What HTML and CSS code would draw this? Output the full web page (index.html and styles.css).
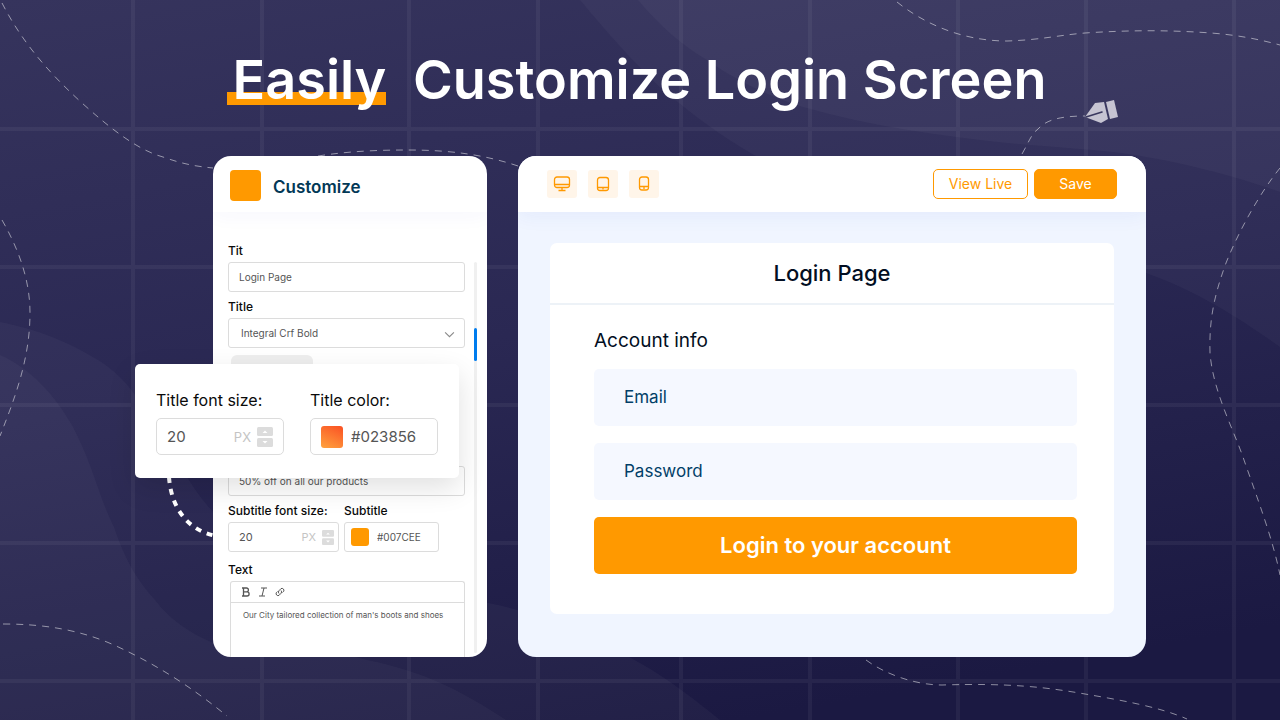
FILE: index.html
```
<!DOCTYPE html>
<html lang="en">
<head>
    <meta charset="UTF-8">
    <meta name="viewport" content="width=device-width, initial-scale=1.0">
    <title>Easily Customize Login Screen</title>
    <link rel="stylesheet" href="styles.css">
</head>
<body>
    <!-- Background waves, grid and dashed lines -->
    <svg class="backdrop" viewBox="0 0 1280 720" preserveAspectRatio="xMidYMid slice" aria-hidden="true">
        <g fill="#fff" fill-opacity="0.03">
            <path d="M580 0C605 30 650 82 679 103C705 124 728 140 754 155C880 225 1020 235 1146 273C1200 292 1245 322 1280 347V0Z"/>
            <path d="M638 0C660 26 680 44 707 60C735 80 770 97 803 107C870 126 940 136 1007 143C1070 149 1110 150 1146 157C1200 166 1245 180 1280 192V0Z"/>
            <path d="M0 322C40 330 68 342 98 360C150 392 150 440 187 477C260 600 400 570 488 603C550 615 600 640 640 663C670 680 698 702 720 720H0Z"/>
            <path d="M0 355C30 368 55 395 73 427C95 470 98 495 114 527C125 560 137 580 155 600C170 620 190 633 213 643C270 660 320 645 367 660C425 672 460 690 506 720H0Z"/>
        </g>
        <path class="grid-lines" d="M133 0V720M262 0V720M409 0V720M538 0V720M681 0V720M810 0V720M958 0V720M1086 0V720M1234 0V720M0 129H1280M0 267H1280M0 405H1280M0 543H1280M0 681H1280"/>
        <g class="dashes">
            <path d="M2 3C22 42 48 72 82 103C112 130 138 150 163 157C180 163 192 166 213 168"/>
            <path d="M318 156C350 151 380 150 408 150C452 150 485 155 518 166"/>
            <path d="M2 220C22 255 30 285 30 313C30 360 14 400 0 436"/>
            <path d="M3 624C45 624 80 630 114 645C160 666 195 690 227 716"/>
            <path d="M897 2C922 22 960 41 1007 41C1040 40 1060 35 1085 33C1130 30 1170 30 1211 33C1237 35 1258 39 1280 45"/>
            <path d="M1022 154C1028 144 1031 134 1038 129C1046 120 1060 116 1085 116"/>
            <path d="M1280 168C1262 190 1240 228 1226 263C1214 296 1209 320 1210 353C1213 392 1234 430 1244 460C1258 500 1273 540 1280 575"/>
            <path d="M866 660C885 674 915 685 942 685C1010 683 1045 687 1085 694C1120 700 1160 707 1187 719"/>
        </g>
        <path class="connector" d="M169 477C171 506 186 530 216 536"/>
        <g fill="#c6c4d2">
            <path d="M1085 117L1095 103L1104 102L1108 119L1101 123Z"/>
            <path d="M1106 102L1114 100L1118 117L1110 119Z"/>
        </g>
        <path d="M1086 117L1102 112" stroke="#3a385f" stroke-width="1.6" stroke-linecap="round"/>
    </svg>

    <!-- Shared icons -->
    <svg class="sprite" aria-hidden="true">
        <symbol id="stepper" viewBox="0 0 16 20">
            <rect width="16" height="9" rx="1.5" fill="#dcdcdc"/>
            <rect y="11" width="16" height="9" rx="1.5" fill="#dcdcdc"/>
            <path d="M5.500 6L8 3.500L10.500 6ZM5.500 14L8 16.500L10.500 14Z" fill="#fff"/>
        </symbol>
    </svg>

    <main class="page">
        <h1 class="headline"><span class="highlight">Easily</span> Customize Login Screen</h1>

        <div class="workspace">
            <!-- Customize panel -->
            <section class="sidebar">
                <div class="panel">
                    <header class="panel-header">
                        <span class="brand"></span>
                        <h2>Customize</h2>
                    </header>
                    <div class="panel-body">
                        <form class="settings">
                            <label for="titleText">Tit</label>
                            <input class="field" id="titleText" type="text" value="Login Page">

                            <label for="titleFont">Title</label>
                            <div class="select-wrap">
                                <select class="field" id="titleFont">
                                    <option>Integral Crf Bold</option>
                                </select>
                                <svg class="chevron" viewBox="0 0 10 6" aria-hidden="true"><path d="M1 1L5 5L9 1"/></svg>
                            </div>

                            <div class="placeholder"></div>

                            <input class="field" type="text" value="50% off on all our products" aria-label="Subtitle text">

                            <div class="pair">
                                <div class="size-col">
                                    <label for="subtitleSize">Subtitle font size:</label>
                                    <div class="field group">
                                        <input id="subtitleSize" type="text" value="20">
                                        <span class="unit">PX</span>
                                        <svg class="stepper"><use href="#stepper"/></svg>
                                    </div>
                                </div>
                                <div class="color-col">
                                    <label for="subtitleColor">Subtitle</label>
                                    <div class="field group color">
                                        <span class="swatch"></span>
                                        <input id="subtitleColor" type="text" value="#007CEE">
                                    </div>
                                </div>
                            </div>

                            <label for="bodyText">Text</label>
                            <div class="editor">
                                <div class="editor-bar">
                                    <button type="button" aria-label="Bold"><svg viewBox="0 0 10 10"><path d="M1 1H2.500V9H1M2.500 1H5.500A1.900 1.900 0 0 1 5.500 4.800H2.500M5.500 4.800H6A2.100 2.100 0 0 1 6 9H2.500" stroke-width="1.300"/></svg></button>
                                    <button type="button" aria-label="Italic"><svg viewBox="0 0 10 10"><path d="M3 1H9M1 9H7M6 1L4 9"/></svg></button>
                                    <button type="button" aria-label="Link"><svg viewBox="0 0 10 10"><path d="M4 6.500A2 2 0 0 1 4 3.700L6 1.600A2 2 0 0 1 8.700 4.300L7.500 5.500M6 3.500A2 2 0 0 1 6 6.300L4 8.400A2 2 0 0 1 1.300 5.700L2.500 4.500"/></svg></button>
                                </div>
                                <textarea id="bodyText">Our City tailored collection of man's boots and shoes</textarea>
                            </div>
                        </form>
                        <div class="scrollbar"><span class="thumb"></span></div>
                    </div>
                </div>

                <!-- Floating card with title options -->
                <div class="popover">
                    <div>
                        <label for="titleSize">Title font size:</label>
                        <div class="field group">
                            <input id="titleSize" type="text" value="20">
                            <span class="unit">PX</span>
                            <svg class="stepper"><use href="#stepper"/></svg>
                        </div>
                    </div>
                    <div>
                        <label for="titleColor">Title color:</label>
                        <div class="field group color">
                            <span class="swatch"></span>
                            <input id="titleColor" type="text" value="#023856">
                        </div>
                    </div>
                </div>
            </section>

            <!-- Live preview -->
            <section class="preview">
                <div class="toolbar">
                    <div class="devices">
                        <button type="button" aria-label="Desktop"><svg viewBox="0 0 18 18"><rect x="1.500" y="2" width="15" height="10.500" rx="2.500"/><path d="M1.500 9.500H16.500M9 12.500V15.500M5.500 15.500H12.500"/></svg></button>
                        <button type="button" aria-label="Tablet"><svg viewBox="0 0 18 18"><rect x="3.500" y="2.500" width="11" height="13" rx="2.500"/><path d="M3.500 12.500H14.500M9 13V14.500"/></svg></button>
                        <button type="button" aria-label="Phone"><svg viewBox="0 0 18 18"><rect x="4.500" y="2" width="9" height="13" rx="2.500"/><path d="M4.500 11.500H13.500M9 12V14"/></svg></button>
                    </div>
                    <button type="button" class="btn btn-outline">View Live</button>
                    <button type="button" class="btn">Save</button>
                </div>
                <div class="canvas">
                    <div class="login-card">
                        <h2>Login Page</h2>
                        <form class="login-form">
                            <h3>Account info</h3>
                            <input type="email" placeholder="Email" aria-label="Email">
                            <input type="password" placeholder="Password" aria-label="Password">
                            <button type="button">Login to your account</button>
                        </form>
                    </div>
                </div>
            </section>
        </div>
    </main>
</body>
</html>
```
FILE: styles.css
```
* {
    box-sizing: border-box;
}

body {
    margin: 0;
    min-height: 100vh;
    position: relative;
    overflow: hidden;
    font-family: Inter, "Liberation Sans", sans-serif;
    background: linear-gradient(170deg, #36345d 0%, #2a2853 45%, #1b1942 90%);
}

h1, h2, h3 {
    margin: 0;
}

input, select, textarea, button {
    font: inherit;
    color: inherit;
    margin: 0;
    padding: 0;
    border: 0;
    background: none;
    outline: none;
    min-width: 0;
}

/* Background drawing */
.backdrop {
    position: absolute;
    top: 0;
    left: 0;
    width: 100%;
    height: 100%;
    fill: none;
}

.sprite {
    display: none;
}

.grid-lines {
    stroke: #fff;
    stroke-opacity: 0.05;
    stroke-width: 4;
}

.dashes {
    stroke: #fff;
    stroke-opacity: 0.5;
    stroke-dasharray: 7 6;
}

.connector {
    stroke: #fff;
    stroke-width: 4;
    stroke-dasharray: 6 6;
}

/* Page layout */
.page {
    position: relative;
    padding: 44px 134px 62px 213px;
}

.headline {
    margin-left: -86px;
    margin-bottom: 40px;
    color: #fff;
    font-size: 54px;
    font-weight: 600;
    line-height: 72px;
    text-align: center;
    white-space: nowrap;
}

.highlight {
    padding-left: 6px;
    margin-right: 13px;
    background: linear-gradient(#ff9900, #ff9900) 0 45px / 100% 13px no-repeat;
}

.workspace {
    display: grid;
    grid-template-columns: 274px 1fr;
    gap: 31px;
}

/* Customize panel */
.sidebar {
    position: relative;
    display: flex;
}

.panel {
    flex: 1;
    display: flex;
    flex-direction: column;
    background: #fff;
    border-radius: 18px;
    overflow: hidden;
}

.panel-header {
    display: flex;
    align-items: center;
    gap: 12px;
    height: 56px;
    padding: 2px 17px 0;
    box-shadow: 0 4px 20px rgba(40, 60, 200, 0.04);
}

.panel-header h2 {
    padding-top: 3px;
    color: #023856;
    font-size: 17px;
    font-weight: 600;
    line-height: 24px;
}

.brand {
    width: 31px;
    height: 31px;
    border-radius: 4px;
    background: #ff9900;
}

.panel-body {
    flex: 1;
    display: flex;
    padding: 31px 10px 0 15px;
    gap: 9px;
}

.settings {
    flex: 1;
    min-width: 0;
    display: flex;
    flex-direction: column;
    font-size: 10px;
    color: #555;
}

.settings label {
    display: block;
    color: #0a0a0a;
    font-size: 12px;
    font-weight: 500;
    line-height: 15px;
    margin-bottom: 4px;
    white-space: nowrap;
}

.field {
    width: 100%;
    height: 30px;
    padding: 0 10px;
    border: 1px solid #dcdcdc;
    border-radius: 3px;
    background: #fff;
}

.settings > .field,
.select-wrap {
    margin-bottom: 7px;
}

.select-wrap {
    position: relative;
}

.select-wrap select {
    appearance: none;
    padding-left: 12px;
}

.chevron {
    position: absolute;
    right: 10px;
    top: 13px;
    width: 11px;
    height: 7px;
    fill: none;
    stroke: #8a8a8a;
}

.placeholder {
    width: 82px;
    height: 30px;
    margin: 0 3px 81px;
    border-radius: 6px;
    background: #eee;
}

.group {
    display: flex;
    align-items: center;
}

.group input {
    flex: 1;
    width: 0;
}

.unit {
    color: #c4c4c4;
}

.pair {
    display: flex;
    gap: 5px;
    margin-bottom: 10px;
}

.size-col {
    width: 111px;
}

.color-col {
    width: 95px;
}

.size-col .group {
    padding: 0 4px 0 10px;
    font-size: 11px;
}

.color-col .group {
    padding: 0 6px;
}

.stepper {
    width: 12px;
    height: 15px;
    margin-left: 6px;
}

.swatch {
    width: 18px;
    height: 18px;
    margin-right: 8px;
    border-radius: 3px;
    background: #ff9900;
}

.editor {
    flex: 1;
    margin-left: 2px;
    border: 1px solid #dcdcdc;
    border-bottom: 0;
    border-radius: 3px 3px 0 0;
}

.editor-bar {
    display: flex;
    gap: 7px;
    height: 21px;
    padding-left: 10px;
    border-bottom: 1px solid #dcdcdc;
}

.editor-bar button {
    width: 10px;
    height: 20px;
    display: grid;
    place-items: center;
}

.editor-bar svg {
    width: 10px;
    height: 10px;
    fill: none;
    stroke: #555;
}

.editor textarea {
    display: block;
    width: 100%;
    height: 54px;
    padding: 6px 0 0 12px;
    resize: none;
    font-size: 8px;
    line-height: 12px;
    white-space: nowrap;
    overflow: hidden;
}

.scrollbar {
    width: 3px;
    margin: 19px 0 4px;
    padding-top: 66px;
    border-radius: 2px;
    background: #f0f0f0;
}

.thumb {
    display: block;
    height: 33px;
    border-radius: 2px;
    background: #007cee;
}

/* Floating card */
.popover {
    position: absolute;
    left: -78px;
    top: 208px;
    display: grid;
    grid-template-columns: 128px 128px;
    gap: 26px;
    padding: 25px 21px 23px;
    border-radius: 5px;
    background: #fff;
    box-shadow: 0 10px 28px rgba(0, 0, 0, 0.12);
    color: #555;
    font-size: 15px;
}

.popover label {
    display: block;
    margin-bottom: 7px;
    color: #0a0a0a;
    font-size: 16px;
    line-height: 22px;
    white-space: nowrap;
}

.popover .field {
    height: 37px;
    border-radius: 5px;
}

.popover .unit {
    font-size: 13px;
}

.popover .stepper {
    width: 16px;
    height: 20px;
}

.popover .swatch {
    width: 22px;
    height: 22px;
    background: linear-gradient(25deg, #ffa33f, #fa5023);
}

/* Live preview */
.preview {
    border-radius: 18px;
    background: #f0f5ff;
    overflow: hidden;
}

.toolbar {
    display: flex;
    align-items: center;
    gap: 6px;
    height: 56px;
    padding: 0 29px;
    background: #fff;
    box-shadow: 0 4px 20px rgba(40, 60, 200, 0.06);
}

.devices {
    display: flex;
    gap: 11px;
    margin-right: auto;
}

.devices button {
    display: grid;
    place-items: center;
    width: 30px;
    height: 28px;
    border-radius: 3px;
    background: #fff5e9;
}

.devices svg {
    width: 18px;
    height: 18px;
    fill: none;
    stroke: #ff9900;
    stroke-width: 1.3px;
}

.btn {
    width: 83px;
    height: 30px;
    border: 1px solid #ff9900;
    border-radius: 5px;
    background: #ff9900;
    color: #fff;
    font-size: 14px;
    line-height: 20px;
}

.btn-outline {
    width: 95px;
    background: #fff;
    color: #ff9900;
}

.canvas {
    padding: 31px 32px 42px;
}

.login-card {
    border-radius: 7px;
    background: #fff;
    color: #020e22;
}

.login-card h2 {
    height: 62px;
    border-bottom: 2px solid #edf2f7;
    font-size: 22px;
    font-weight: 500;
    line-height: 60px;
    text-align: center;
}

.login-form {
    display: flex;
    flex-direction: column;
    gap: 17px;
    padding: 23px 37px 40px 44px;
}

.login-form h3 {
    margin-bottom: -1px;
    font-size: 19px;
    font-weight: 400;
    line-height: 25px;
}

.login-form input,
.login-form button {
    height: 57px;
    border-radius: 5px;
}

.login-form input {
    padding: 0 30px 2px;
    background: #f5f8ff;
    font-size: 17px;
}

.login-form input::placeholder {
    color: #023f68;
    opacity: 1;
}

.login-form button {
    padding-bottom: 2px;
    background: #ff9900;
    color: #fff;
    font-size: 22px;
    font-weight: 600;
}
```
